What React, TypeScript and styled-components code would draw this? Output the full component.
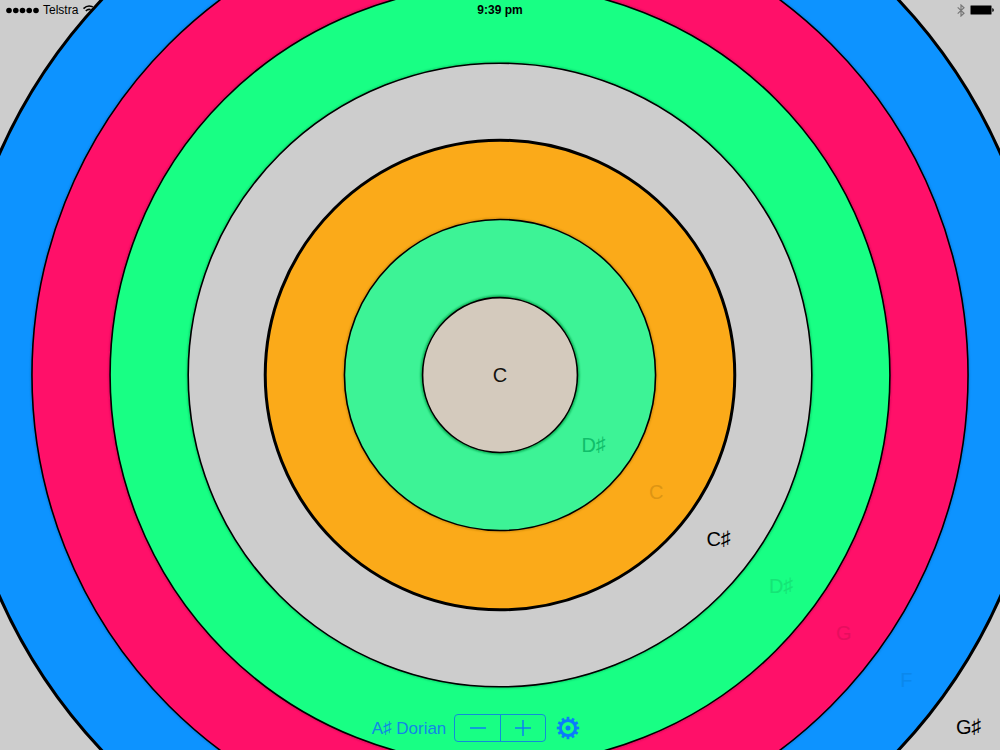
import React, { useState } from "react";
import styled, { createGlobalStyle } from "styled-components";

const GlobalStyle = createGlobalStyle`
  *, *::before, *::after { box-sizing: border-box; }
  body {
    margin: 0;
    background: #cdcdcd;
    font-family: "Liberation Sans", "DejaVu Sans", sans-serif;
    color: #000;
  }
`;

const Screen = styled.main`
  position: relative;
  display: flex;
  flex-direction: column;
  justify-content: space-between;
  min-height: 100vh;
  overflow: hidden;
`;

const Canvas = styled.div`
  position: absolute;
  inset: 0;
`;

const Rings = styled.svg`
  display: block;
  position: absolute;
  width: 100%;
  height: 100%;
`;

const NoteLabel = styled.span<{ $step: number; $color: string }>`
  position: absolute;
  left: calc(50% + ${(p) => p.$step} * 6.25%);
  top: calc(50% + ${(p) => p.$step} * 6.25%);
  transform: translate(-50%, -50%);
  padding-bottom: 1px;
  font-size: 20px;
  line-height: 24px;
  white-space: nowrap;
  color: ${(p) => p.$color};
`;

const Sharp = styled.span`
  line-height: 1;
  vertical-align: 1px;
`;

const StatusBar = styled.header`
  position: relative;
  display: grid;
  grid-template-columns: 1fr auto 1fr;
  align-items: center;
  height: 20px;
  padding: 0 6px;
  font-size: 12px;
  line-height: 20px;
`;

const Carrier = styled.div`
  display: flex;
  align-items: center;
  gap: 4px;
`;

const Clock = styled.time`
  font-weight: bold;
`;

const Power = styled.div`
  display: flex;
  align-items: center;
  justify-content: flex-end;
  gap: 5px;
`;

const Toolbar = styled.footer`
  position: relative;
  display: flex;
  align-items: center;
  justify-content: center;
  height: 44px;
  padding-right: 48px;
`;

const ScaleName = styled.output`
  margin-right: 8px;
  padding-top: 2px;
  font-size: 17px;
  line-height: 20px;
  color: #1187e4;
`;

const Stepper = styled.div`
  display: flex;
  width: 92px;
  height: 28px;
  margin-right: 10px;
  border: 1px solid #108ed8;
  border-radius: 4px;
`;

const StepButton = styled.button`
  display: flex;
  flex: 1;
  align-items: center;
  justify-content: center;
  padding: 0;
  border: 0;
  background: none;
  color: #0b80f2;
  cursor: pointer;

  & + & {
    border-left: 1px solid #108ed8;
  }
`;

const GearButton = styled.button`
  display: flex;
  padding: 0;
  border: 0;
  background: none;
  color: #0a7cfb;
  cursor: pointer;
`;

const rings = [
  { fill: "#0d93ff", glow: "#0d93ff", note: "F", color: "#0b88ec", thick: true },
  { fill: "#ff1069", glow: "#0b7ddd", note: "G", color: "#e60e5e", thick: false },
  { fill: "#18ff84", glow: "#d80b58", note: "D♯", color: "#15e476", thick: false },
  { fill: "#cdcdcd", glow: "#10cc68", note: "C♯", color: "#000000", thick: false },
  { fill: "#fbaa19", glow: "#cdcdcd", note: "C", color: "#dd9513", thick: true },
  { fill: "#3df396", glow: "#cf8910", note: "D♯", color: "#10be6a", thick: false },
  { fill: "#d4cabd", glow: "#08a94f", note: "C", color: "#15130f", thick: false },
];

const RING_STEP = 78.125;
const scales = ["A Dorian", "A♯ Dorian", "B Dorian"];
const gearTeeth = Array.from({ length: 12 }, (_, i) => i * 30);

function NoteText({ text }: { text: string }) {
  const [before, after] = text.split("♯");
  if (after === undefined) return <>{text}</>;
  return (
    <>
      {before}
      <Sharp>♯</Sharp>
      {after}
    </>
  );
}

export default function App() {
  const [scale, setScale] = useState(1);
  const count = rings.length;

  return (
    <>
      <GlobalStyle />
      <Screen>
        <Canvas>
          <Rings viewBox="0 0 1000 750" preserveAspectRatio="xMidYMid slice" aria-hidden="true">
            <defs>
              <filter id="soft" x="-5%" y="-5%" width="110%" height="110%">
                <feGaussianBlur stdDeviation="0.8" />
              </filter>
            </defs>
            {rings.map((ring, i) => {
              const r = (count - i) * RING_STEP + (ring.thick ? 0.4 : -0.7);
              return (
                <g key={i}>
                  {!ring.thick && (
                    <circle
                      cx="500"
                      cy="375"
                      r={r}
                      fill="none"
                      stroke={ring.glow}
                      strokeWidth={i === count - 1 ? 4 : 3}
                      filter="url(#soft)"
                    />
                  )}
                  <circle
                    cx="500"
                    cy="375"
                    r={r}
                    fill={ring.fill}
                    stroke="#000"
                    strokeWidth={ring.thick ? 3 : 1.6}
                  />
                </g>
              );
            })}
          </Rings>
          <NoteLabel $step={7.5} $color="#000000">
            <NoteText text="G♯" />
          </NoteLabel>
          {rings.map((ring, i) => (
            <NoteLabel
              key={i}
              $step={i === count - 1 ? 0 : count - i - 0.5}
              $color={ring.color}
            >
              <NoteText text={ring.note} />
            </NoteLabel>
          ))}
        </Canvas>

        <StatusBar>
          <Carrier>
            <svg width="33" height="7" viewBox="0 0 33 7" aria-label="Signal strength">
              {[3, 9.8, 16.5, 23.2, 30].map((x) => (
                <circle key={x} cx={x} cy="3.5" r="2.8" />
              ))}
            </svg>
            <span>Telstra</span>
            <svg width="14" height="10" viewBox="0 0 14 10" aria-label="Wi-Fi">
              <defs>
                <clipPath id="wifi-edge">
                  <path d="M0 0H12.5L4 10H0Z" />
                </clipPath>
              </defs>
              <g clipPath="url(#wifi-edge)" fill="none" stroke="#000" strokeWidth="1.6">
                <path d="M1.5 3.6Q7 -1.6 13 3.6" />
                <path d="M3.8 6Q7 2.8 10.8 6" />
              </g>
            </svg>
          </Carrier>
          <Clock>9:39 pm</Clock>
          <Power>
            <svg width="8" height="13" viewBox="0 0 8 13" aria-label="Bluetooth">
              <path
                d="M0.7 3.4L7 9.2L4 12V1L7 3.8L0.7 9.6"
                fill="none"
                stroke="#777"
                strokeWidth="1.2"
              />
            </svg>
            <svg width="24" height="10" viewBox="0 0 24 10" aria-label="Battery full">
              <rect x="0.5" y="0.5" width="21" height="9" rx="1" fill="#000" stroke="#666" />
              <path d="M22.3 3.2H23Q24.6 5 23 6.8H22.3Z" />
            </svg>
          </Power>
        </StatusBar>

        <Toolbar>
          <ScaleName>
            <NoteText text={scales[scale]} />
          </ScaleName>
          <Stepper role="group" aria-label="Scale">
            <StepButton
              type="button"
              aria-label="Previous scale"
              onClick={() => setScale((s) => Math.max(0, s - 1))}
            >
              <svg width="16" height="16" viewBox="0 0 16 16" aria-hidden="true">
                <path d="M0 8H16" stroke="currentColor" strokeWidth="1.5" />
              </svg>
            </StepButton>
            <StepButton
              type="button"
              aria-label="Next scale"
              onClick={() => setScale((s) => Math.min(scales.length - 1, s + 1))}
            >
              <svg width="16" height="16" viewBox="0 0 16 16" aria-hidden="true">
                <path d="M0 8H16M8 0V16" stroke="currentColor" strokeWidth="1.5" />
              </svg>
            </StepButton>
          </Stepper>
          <GearButton type="button" aria-label="Settings">
            <svg width="24" height="24" viewBox="-12 -12 24 24" aria-hidden="true">
              <circle r="7.6" fill="none" stroke="currentColor" strokeWidth="3" />
              {gearTeeth.map((angle) => (
                <path
                  key={angle}
                  d="M0 -8V-11.2"
                  stroke="currentColor"
                  strokeWidth="2.7"
                  transform={`rotate(${angle})`}
                />
              ))}
              <circle r="2.5" fill="currentColor" />
            </svg>
          </GearButton>
        </Toolbar>
      </Screen>
    </>
  );
}
